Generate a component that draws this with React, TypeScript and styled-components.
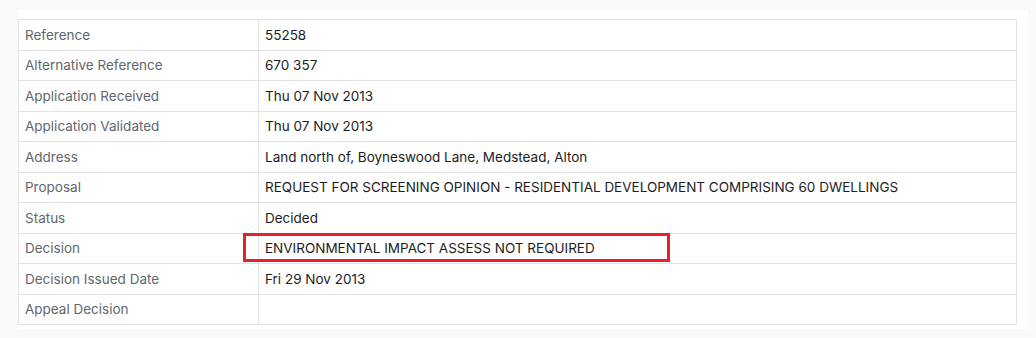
import React from "react"
import styled, { createGlobalStyle } from "styled-components"

const GlobalStyle = createGlobalStyle`
  html, body {
    margin: 0;
    padding: 0;
    background: #fafafa;
  }
  body {
    font-family: "Inter", "Liberation Sans", sans-serif;
  }
`

interface Row {
  label: string
  value: string
  highlight?: boolean
}

const rows: Row[] = [
  { label: "Reference", value: "55258" },
  { label: "Alternative Reference", value: "670 357" },
  { label: "Application Received", value: "Thu 07 Nov 2013" },
  { label: "Application Validated", value: "Thu 07 Nov 2013" },
  { label: "Address", value: "Land north of, Boyneswood Lane, Medstead, Alton" },
  {
    label: "Proposal",
    value:
      "REQUEST FOR SCREENING OPINION - RESIDENTIAL DEVELOPMENT COMPRISING 60 DWELLINGS"
  },
  { label: "Status", value: "Decided" },
  {
    label: "Decision",
    value: "ENVIRONMENTAL IMPACT ASSESS NOT REQUIRED",
    highlight: true
  },
  { label: "Decision Issued Date", value: "Fri 29 Nov 2013" },
  { label: "Appeal Decision", value: "" }
]

export default function App() {
  return (
    <>
      <GlobalStyle />
      <Card>
        <Table>
          <tbody>
            {rows.map((row) => (
              <tr key={row.label}>
                <LabelCell>{row.label}</LabelCell>
                <ValueCell>
                  {row.value}
                  {row.highlight && <Highlight />}
                </ValueCell>
              </tr>
            ))}
          </tbody>
        </Table>
      </Card>
    </>
  )
}

// Styled
const Card = styled.div`
  width: 1005px;
  margin: 10px 0 0 17px;
  padding: 9px 5px 4px 1px;
  background: #fff;
`

const Table = styled.table`
  width: 999px;
  border-collapse: collapse;
  table-layout: fixed;
  font-size: 13.5px;

  tr {
    height: 30.5px;
  }
`

const LabelCell = styled.td`
  width: 240px;
  box-sizing: border-box;
  padding: 0 6px;
  border: 1px solid #e2e2e2;
  color: #62666d;
  vertical-align: middle;
`

const ValueCell = styled.td`
  position: relative;
  padding: 0 6px;
  border: 1px solid #e2e2e2;
  color: #1c1c24;
  vertical-align: middle;
`

const Highlight = styled.span`
  position: absolute;
  left: -16px;
  top: -1px;
  width: 427px;
  height: 29px;
  box-sizing: border-box;
  border: 3px solid #e8202a;
  pointer-events: none;
`
